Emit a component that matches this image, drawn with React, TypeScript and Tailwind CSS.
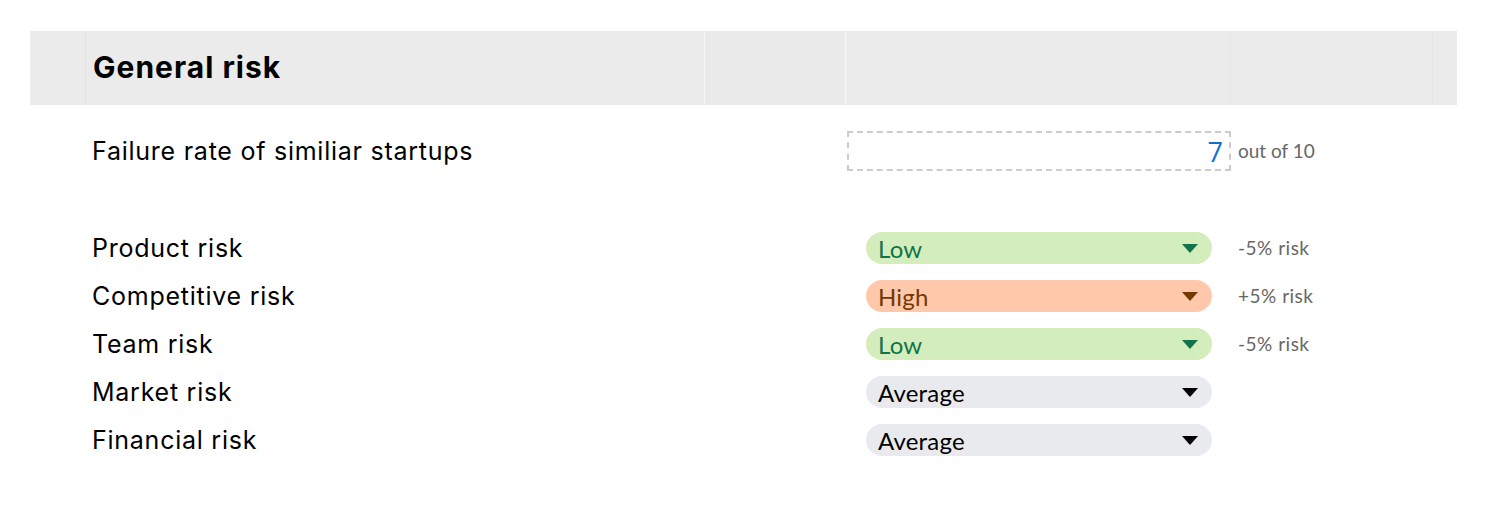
const risks = [
  { label: "Product risk", value: "Low", tone: "low", note: "-5% risk" },
  { label: "Competitive risk", value: "High", tone: "high", note: "+5% risk" },
  { label: "Team risk", value: "Low", tone: "low", note: "-5% risk" },
  { label: "Market risk", value: "Average", tone: "avg", note: "" },
  { label: "Financial risk", value: "Average", tone: "avg", note: "" },
];

const chipTone: Record<string, { chip: string; arrow: string }> = {
  low: { chip: "bg-[#d4edbc] text-[#11734b]", arrow: "#11734b" },
  high: { chip: "bg-[#ffc8aa] text-[#753800]", arrow: "#753800" },
  avg: { chip: "bg-[#e8eaed] text-black", arrow: "#000000" },
};

const cols = "grid w-[1427px] grid-cols-[56px_618px_142px_385px_202px_24px]";

function Chip({ value, tone }: { value: string; tone: string }) {
  const t = chipTone[tone];
  return (
    <div className={`flex h-[32px] items-center justify-between rounded-full pl-[12px] pr-[14px] ${t.chip}`}>
      <span className="text-[24px] leading-none pt-[1px] tracking-[0.2px] font-['Lato',sans-serif]">{value}</span>
      <svg width="16" height="9" viewBox="0 0 16 9">
        <path d="M0 0 L16 0 L8 9 Z" fill={t.arrow} />
      </svg>
    </div>
  );
}

export default function App() {
  return (
    <div className="w-[1502px] h-[514px] bg-white pt-[31px] pl-[30px] font-['Inter',sans-serif] text-black">
      {/* Section header */}
      <div className={`${cols} h-[74px] bg-[#ebebeb]`}>
        <div className="border-r border-[#e3e3e3]" />
        <div className="flex items-center pl-[7px] pb-[1px] text-[30px] font-bold tracking-[1px]">General risk</div>
        <div className="my-px border-x border-white/60 bg-[#eaeaea]" />
        <div className="border-r border-[#e6e6e6]" />
        <div className="border-r border-[#e6e6e6]" />
        <div />
      </div>

      {/* Failure rate */}
      <div className={`${cols} mt-[26px] h-[40px] items-center`}>
        <div />
        <div className="pl-[6px] pt-[1px] text-[25px] tracking-[0.75px]">Failure rate of similiar startups</div>
        <div />
        <div className="ml-px flex h-[40px] items-center justify-end border-2 border-dashed border-[#cccccc] pr-[6px]">
          <span className="text-[27px] leading-none text-[#1170cf] font-['Open_Sans',sans-serif]">7</span>
        </div>
        <div className="pl-[7px] text-[19px] text-[#666666] font-['Lato',sans-serif]">out of 10</div>
        <div />
      </div>

      {/* Risk selectors */}
      <div className="mt-[53px]">
        {risks.map((r) => (
          <div key={r.label} className={`${cols} h-[48px] items-center`}>
            <div />
            <div className="pl-[6px] pt-[2px] text-[25px] tracking-[0.75px]">{r.label}</div>
            <div />
            <div className="pl-[20px] pr-[19px]">
              <Chip value={r.value} tone={r.tone} />
            </div>
            <div className="pl-[7px] text-[19px] tracking-[0.5px] text-[#666666] font-['Lato',sans-serif]">{r.note}</div>
            <div />
          </div>
        ))}
      </div>
    </div>
  );
}
